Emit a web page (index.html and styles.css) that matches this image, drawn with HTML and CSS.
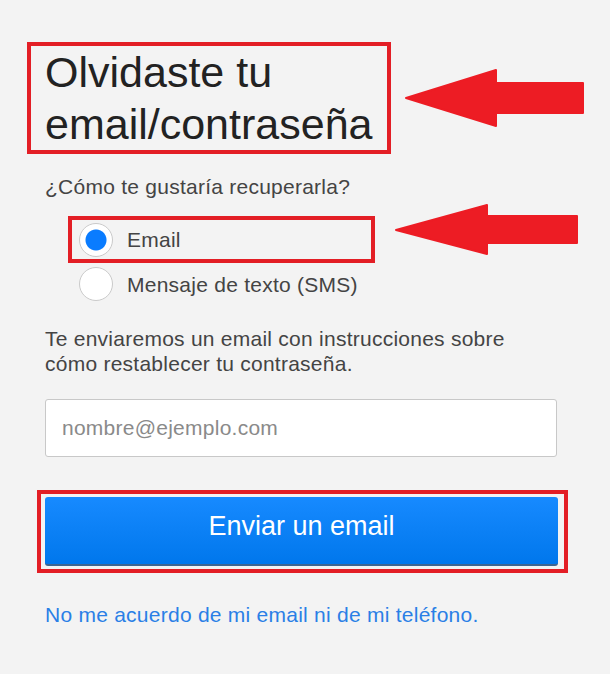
FILE: index.html
```html
<!DOCTYPE html>
<html lang="es">
<head>
    <meta charset="UTF-8">
    <meta name="viewport" content="width=device-width, initial-scale=1.0">
    <title>Olvidaste tu email/contraseña</title>
    <link rel="stylesheet" href="styles.css">
</head>
<body>
    <div class="page">
        <div class="title-box">
            <h1>Olvidaste tu email/contraseña</h1>
        </div>

        <p class="question">¿Cómo te gustaría recuperarla?</p>

        <div class="options">
            <label class="option marked">
                <input type="radio" name="method" checked>
                <span>Email</span>
            </label>
            <label class="option">
                <input type="radio" name="method">
                <span>Mensaje de texto (SMS)</span>
            </label>
        </div>

        <p class="info">Te enviaremos un email con instrucciones sobre cómo restablecer tu contraseña.</p>

        <input class="email" type="text" placeholder="nombre@ejemplo.com">

        <div class="button-box">
            <button class="send">Enviar un email</button>
        </div>

        <a class="help" href="#">No me acuerdo de mi email ni de mi teléfono.</a>

        <!-- annotation arrows -->
        <svg class="arrows" width="610" height="674" viewBox="0 0 610 674">
            <polygon points="406,98 496,70 496,83 583,83 583,113 496,113 496,126" />
            <polygon points="396,230 487,205 487,216 577,216 577,243 487,243 487,254" />
        </svg>
    </div>
</body>
</html>
```

FILE: styles.css
```css
body {
    margin: 0;
    background-color: #f3f3f3;
    font-family: "Liberation Sans", Arial, sans-serif;
    color: #444;
}
.page {
    position: relative;
    width: 610px;
    height: 674px;
    box-sizing: border-box;
    padding: 42px 0 0 45px;
}
.title-box {
    width: 364px;
    box-sizing: border-box;
    margin-left: -18px;
    padding: 0 0 0 14px;
    border: 4px solid #e31e25;
}
h1 {
    margin: 0;
    font-size: 43px;
    line-height: 52px;
    font-weight: normal;
    color: #222;
}
.question {
    margin: 20px 0 0;
    font-size: 21px;
    line-height: 25px;
    letter-spacing: 0.25px;
}
.options {
    margin-top: 17px;
}
.option {
    display: flex;
    align-items: center;
    gap: 14px;
    height: 42px;
    margin-left: 23px;
    padding-left: 11px;
    font-size: 21px;
    line-height: 25px;
    letter-spacing: 0.25px;
    box-sizing: border-box;
}
.option.marked {
    width: 307px;
    height: 47px;
    padding-left: 7px;
    border: 4px solid #e31e25;
}
.option input {
    appearance: none;
    margin: 0;
    width: 34px;
    height: 34px;
    border: 1px solid #cacaca;
    border-radius: 50%;
    background: #fff;
}
.option input:checked {
    background: radial-gradient(circle, #0a7cff 0 10px, #fff 11px);
}
.info {
    max-width: 480px;
    margin: 21px 0 0;
    font-size: 21px;
    line-height: 25px;
    letter-spacing: 0.25px;
}
.email {
    display: block;
    width: 512px;
    height: 58px;
    box-sizing: border-box;
    margin-top: 23px;
    padding: 0 16px;
    border: 1px solid #c8c8c8;
    border-radius: 3px;
    background: #fff;
    font-family: inherit;
    font-size: 21px;
    letter-spacing: 0.25px;
    color: #333;
}
.email::placeholder {
    color: #8a8a8a;
}
.button-box {
    width: 531px;
    box-sizing: border-box;
    margin: 33px 0 0 -8px;
    padding: 3px 6px 3px 4px;
    border: 4px solid #e31e25;
}
.send {
    display: block;
    width: 100%;
    height: 69px;
    padding: 0 0 9px;
    border: none;
    border-bottom: 2px solid #3d6591;
    border-radius: 3px;
    background: linear-gradient(#178aff, #0077ec);
    color: #fff;
    font-family: inherit;
    font-size: 27px;
}
.help {
    display: block;
    margin-top: 29px;
    font-size: 21px;
    line-height: 25px;
    letter-spacing: 0.25px;
    color: #2a7fe6;
    text-decoration: none;
}
.arrows {
    position: absolute;
    top: 0;
    left: 0;
    pointer-events: none;
}
.arrows polygon {
    fill: #ed1c24;
    stroke: #ed1c24;
    stroke-width: 2;
    stroke-linejoin: round;
}
```
